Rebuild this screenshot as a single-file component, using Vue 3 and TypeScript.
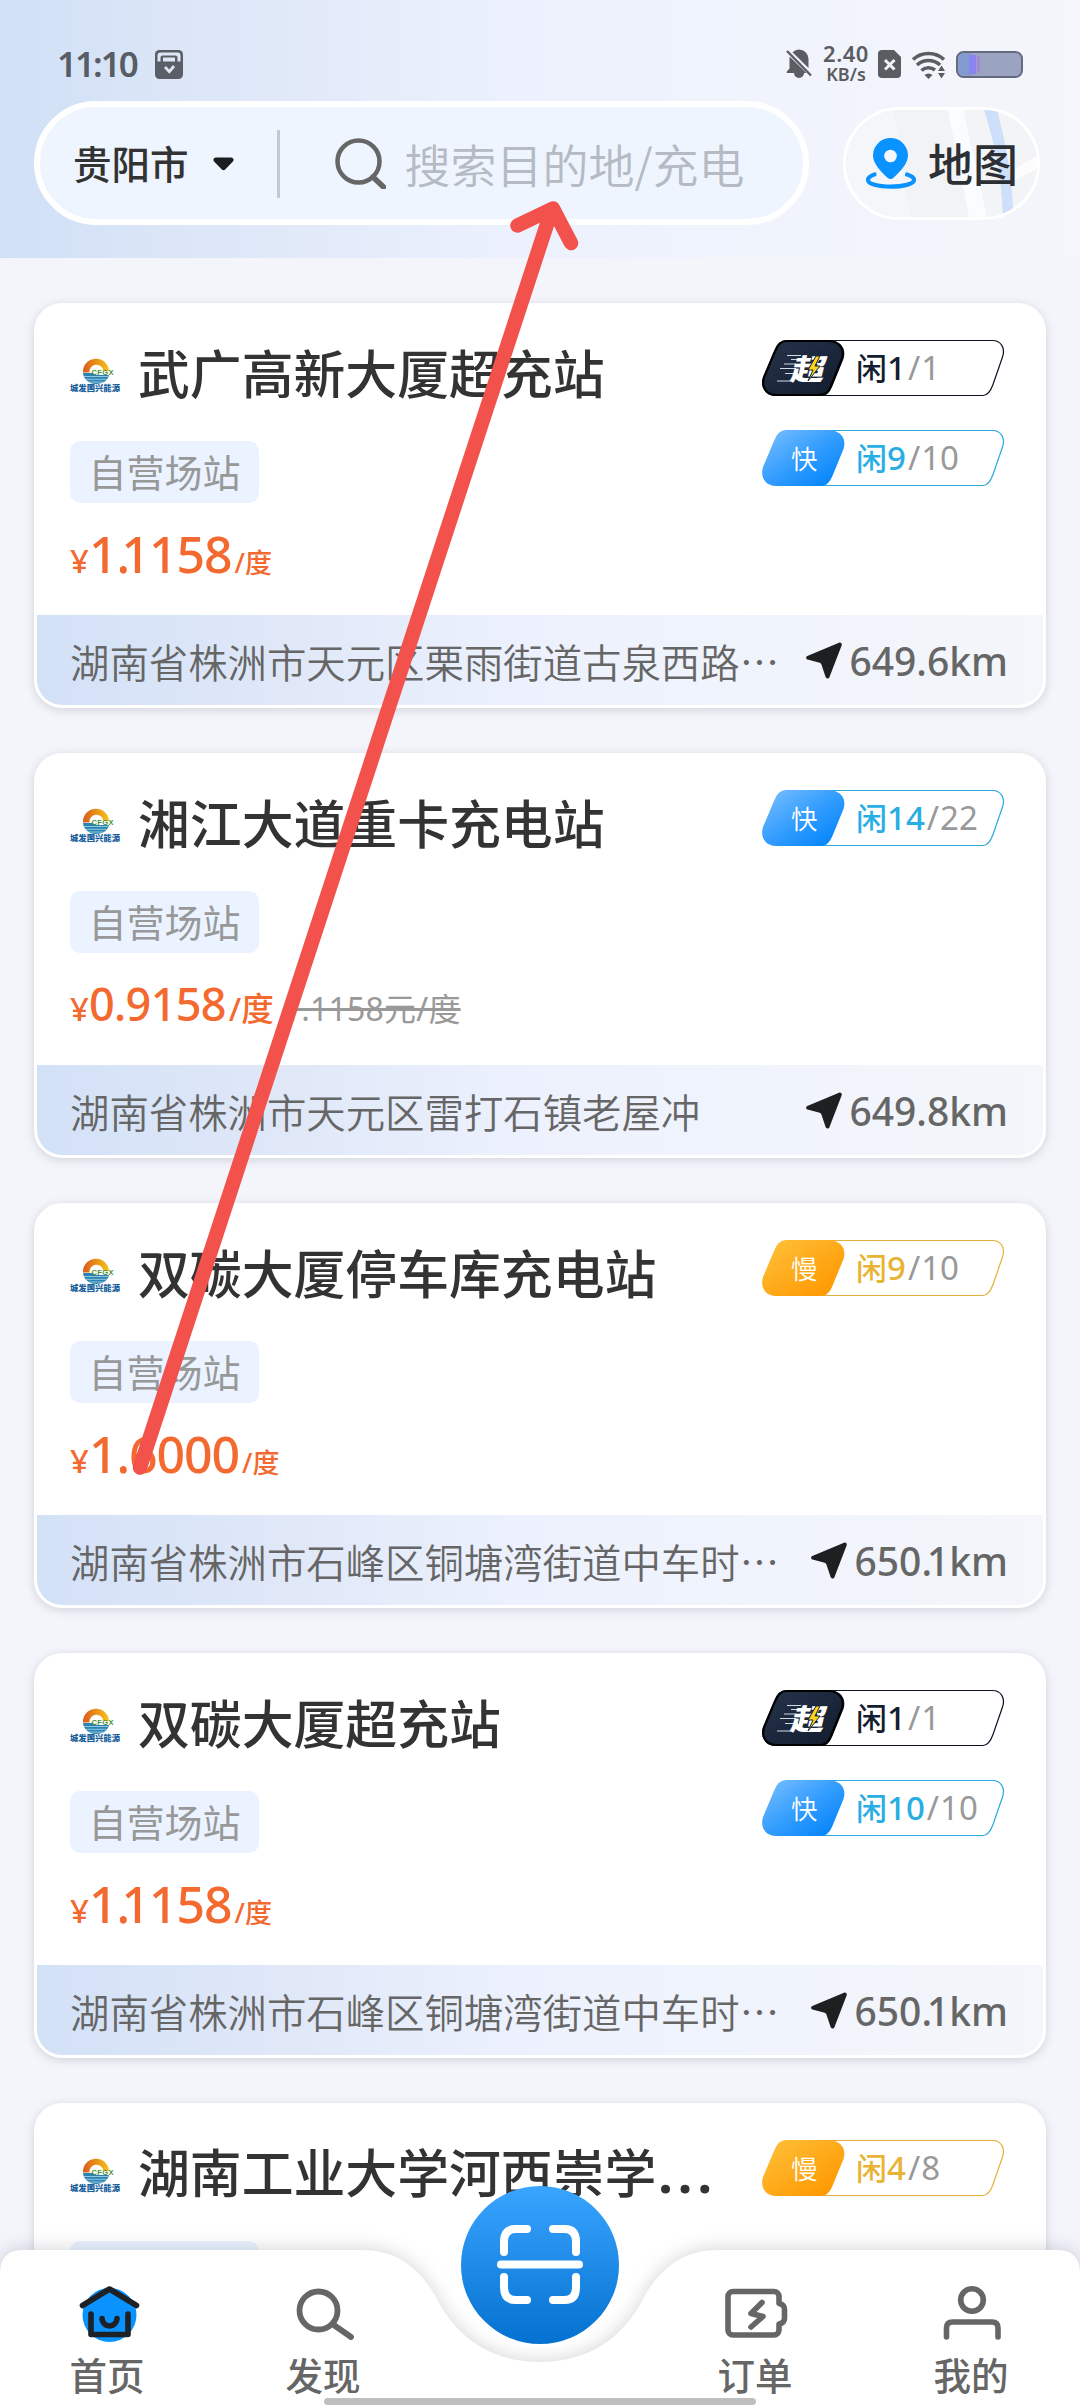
<script setup lang="ts">
type ChipKind = 'super' | 'fast' | 'slow'

interface Chip {
  kind: ChipKind
  free: number
  total: number
}

interface Station {
  name: string
  cut?: boolean
  price?: string
  discounted?: boolean
  original?: string
  address?: string
  distance?: string
  chips: Chip[]
}

const stations: Station[] = [
  {
    name: '武广高新大厦超充站',
    price: '1.1158',
    address: '湖南省株洲市天元区栗雨街道古泉西路…',
    distance: '649.6km',
    chips: [
      { kind: 'super', free: 1, total: 1 },
      { kind: 'fast', free: 9, total: 10 },
    ],
  },
  {
    name: '湘江大道重卡充电站',
    price: '0.9158',
    discounted: true,
    original: '1.1158元/度',
    address: '湖南省株洲市天元区雷打石镇老屋冲',
    distance: '649.8km',
    chips: [{ kind: 'fast', free: 14, total: 22 }],
  },
  {
    name: '双碳大厦停车库充电站',
    price: '1.6000',
    address: '湖南省株洲市石峰区铜塘湾街道中车时…',
    distance: '650.1km',
    chips: [{ kind: 'slow', free: 9, total: 10 }],
  },
  {
    name: '双碳大厦超充站',
    price: '1.1158',
    address: '湖南省株洲市石峰区铜塘湾街道中车时…',
    distance: '650.1km',
    chips: [
      { kind: 'super', free: 1, total: 1 },
      { kind: 'fast', free: 10, total: 10 },
    ],
  },
  {
    name: '湖南工业大学河西崇学',
    cut: true,
    chips: [{ kind: 'slow', free: 4, total: 8 }],
  },
]

const chipLabel: Record<ChipKind, string> = { super: '超', fast: '快', slow: '慢' }
const chipLine: Record<ChipKind, string> = { super: '#0b1222', fast: '#2aa9dc', slow: '#e3b23c' }

// Splits a number after its decimal point so that a following 1 can be kerned.
function pieces(value: string): { text: string; kern: boolean }[] {
  const at = value.indexOf('.') + 1
  const tail = value.slice(at)
  return [
    { text: value.slice(0, at), kern: false },
    { text: tail, kern: tail.startsWith('1') },
  ]
}
</script>

<template>
  <div class="app">
    <svg class="defs" width="0" height="0" aria-hidden="true">
      <defs>
        <linearGradient id="g-super" x1="0" y1="0" x2="1" y2="1">
          <stop offset="0" stop-color="#26344b" />
          <stop offset="1" stop-color="#111b2d" />
        </linearGradient>
        <linearGradient id="g-fast" x1="0" y1="0" x2="1" y2="1">
          <stop offset="0" stop-color="#7cc0ff" />
          <stop offset="0.5" stop-color="#339dfe" />
          <stop offset="0.9" stop-color="#0585fb" />
        </linearGradient>
        <linearGradient id="g-slow" x1="0" y1="0" x2="1" y2="1">
          <stop offset="0" stop-color="#ffc23c" />
          <stop offset="0.9" stop-color="#fe9800" />
        </linearGradient>
        <linearGradient id="g-sun" x1="0" y1="0" x2="1" y2="0">
          <stop offset="0" stop-color="#dc5a1c" />
          <stop offset="1" stop-color="#f5c518" />
        </linearGradient>
      </defs>
    </svg>

    <header class="top">
      <div class="status">
        <div class="status-side">
          <span class="clock">11:10</span>
          <svg width="28" height="29" viewBox="0 0 28 29">
            <rect width="28" height="29" rx="4.5" fill="#5a5e67" />
            <path d="M2.5 11.500V5.500a3 3 0 0 1 3-3h17a3 3 0 0 1 3 3v6h-3V7.500a2 2 0 0 0-2-2h-13a2 2 0 0 0-2 2v4z" fill="#dfe6f5" />
            <path d="M8 7.500h12v4H8z" fill="#dfe6f5" />
            <path d="M10 17l4.300 4.600L19 16" fill="none" stroke="#dfe6f5" stroke-width="2.800" />
          </svg>
        </div>
        <div class="status-side right">
          <svg width="26" height="30" viewBox="0 0 26 30">
            <path d="M13 .5a9.500 9.500 0 0 1 9.500 9.500v9L6.500 3.200A9.500 9.500 0 0 1 13 .5z" fill="#5b5d63" />
            <path d="M3.500 7.500L20.500 24H.8v-1.500l2.700-3z" fill="#5b5d63" />
            <path d="M8 24h10a5 5 0 0 1-10 0z" fill="#5b5d63" />
            <path d="M1 2l24 24.500" stroke="#5b5d63" stroke-width="2.400" />
          </svg>
          <div class="speed"><b>2.40</b><i>KB/s</i></div>
          <svg class="sim" width="23" height="28" viewBox="0 0 23 28">
            <path d="M4 0h12l7 7v17a4 4 0 0 1-4 4H4a4 4 0 0 1-4-4V4a4 4 0 0 1 4-4z" fill="#5b5d63" />
            <path d="M7 10l9.500 9.500M16.500 10L7 19.500" stroke="#eff3fb" stroke-width="3" />
          </svg>
          <svg class="wifi" width="36" height="29" viewBox="0 0 36 29">
            <g fill="none" stroke="#5b5d63" stroke-width="3.600">
              <path d="M2 9.500a23 23 0 0 1 31 0" />
              <path d="M6 15a17 17 0 0 1 23 0" />
              <path d="M10.500 20.500a10.500 10.500 0 0 1 13.500-.5" />
            </g>
            <path d="M13.500 25a6 6 0 0 1 8 0l-4 4z" fill="#5b5d63" />
            <path d="M27 21l3.500-5.500L34 21zM27 23h7l-3.500 5.500z" fill="#5b5d63" />
          </svg>
          <svg class="battery" width="67" height="27" viewBox="0 0 67 27">
            <rect x="1" y="1" width="65" height="25" rx="6.500" fill="#9aa3c0" stroke="#646b80" stroke-width="2" />
            <path d="M8 2.500h8v22H8a5.500 5.500 0 0 1-5.500-5.500V8A5.500 5.500 0 0 1 8 2.500z" fill="#809bd0" />
            <rect x="13" y="4" width="7" height="19" fill="#8b83ee" />
            <rect x="21" y="5" width="3" height="17" fill="#a489d8" />
          </svg>
        </div>
      </div>

      <div class="search-row">
        <div class="search">
          <span class="city">贵阳市</span>
          <svg class="caret" width="21" height="14" viewBox="0 0 21 14">
            <path d="M3 .5h15c2.500 0 3.400 2.600 1.700 4.300l-7.300 7.400a2.700 2.700 0 0 1-3.800 0L1.300 4.800C-.4 3.100.5.5 3 .5z" fill="#1b1d20" />
          </svg>
          <span class="split"></span>
          <svg class="glass" width="51" height="51" viewBox="0 0 51 51">
            <circle cx="23.500" cy="23.500" r="21" fill="none" stroke="#666" stroke-width="4.500" />
            <path d="M38 39l10.500 10" stroke="#666" stroke-width="5.500" stroke-linecap="round" />
          </svg>
          <span class="hint">搜索目的地/充电</span>
        </div>
        <div class="map">
          <svg class="map-bg" viewBox="0 0 191 106" preserveAspectRatio="none">
            <rect width="191" height="106" fill="#f4f6fa" />
            <path d="M48 0h54l30 106H64z" fill="#f1f3f7" />
            <path d="M118 0h73v106h-53z" fill="#f3f4f6" />
            <path d="M102 0h15l24 106h-18z" fill="#fafcff" />
            <path d="M166 60l30-18v14l-28 14z" fill="#fdfdfe" />
            <path d="M138 0h13q15 55 16 100l-10 6q-2-55-19-106z" fill="#cddffb" />
          </svg>
          <svg class="pin" width="52" height="52" viewBox="0 0 52 52">
            <path d="M25.500 1A17.500 17.500 0 0 1 43 18.500c0 9-9 17-14.500 22.300a4.200 4.200 0 0 1-6 0C17 35.500 8 27.500 8 18.500A17.500 17.500 0 0 1 25.500 1z" fill="#0a92ff" />
            <circle cx="25.500" cy="19" r="6.300" fill="#f4f8fd" />
            <path d="M9.500 37.500C5 39 3 41 3 43c0 4 10 6.700 22.500 6.700S49 47 49 43c0-2-2.500-4.200-7-5.500" fill="none" stroke="#0a92ff" stroke-width="4.200" stroke-linecap="round" />
          </svg>
          <span class="map-text">地图</span>
        </div>
      </div>
    </header>

    <main class="list">
      <article v-for="s in stations" :key="s.name" class="card">
        <div class="body">
          <div class="info">
            <div class="title">
              <svg class="logo" width="52" height="35" viewBox="0 0 52 35">
                <path d="M13 16.500a13 13 0 1 1 26-1.500h-5.500a7 7 0 0 0-14 1.500z" fill="url(#g-sun)" />
                <path d="M13 17h9l4 2h13c-.8 5-6 9-13 9s-12.500-5-13-11z" fill="#2b82b3" />
                <path d="M14 20.500h24M15.500 23.300h21M18.500 26h15" stroke="#a9dcea" stroke-width=".8" />
                <text x="21.500" y="18.500" class="logo-en" textLength="22">CFGX</text>
                <text x="0" y="35" class="logo-cn" textLength="50" lengthAdjust="spacingAndGlyphs">城发国兴能源</text>
              </svg>
              <h2>{{ s.name }}<span v-if="s.cut" class="dots">...</span></h2>
            </div>
            <span class="tag">自营场站</span>
            <div v-if="s.price" class="price" :class="{ sale: s.discounted }">
              <span class="yen">¥</span>
              <span class="num"><span v-for="p in pieces(s.price)" :key="p.text" :class="{ kern: p.kern }">{{ p.text }}</span></span>
              <span class="unit">/度</span>
              <del v-if="s.original">{{ s.original }}</del>
            </div>
          </div>
          <div class="chips">
            <div v-for="c in s.chips" :key="c.kind" class="chip" :class="c.kind">
              <svg class="chip-bg" width="242" height="56" viewBox="0 0 242 56">
                <path d="M24 .5H230.500C239 .5 243.500 8 240.500 17L231 44.500Q227 55.500 221 55.500H14" fill="#fff" :stroke="chipLine[c.kind]" stroke-width="1.200" />
                <path
                  d="M24 0H66C78 0 85 8 81.500 19L70 47Q66 56 59 56H14C3 56-2 47 1 37L12 11Q16 0 24 0z"
                  :fill="`url(#g-${c.kind})`"
                />
                <g v-if="c.kind === 'super'">
                  <path d="M24.500 1H66C76.500 1 83 8 80 18.500L68.800 46.500Q65.500 55 58.500 55H14C4 55-1 46.500 2 37.300L13 11.400Q17 1 24.500 1z" fill="none" stroke="#000" stroke-width="2.200" />
                  <path d="M25 15.500h14M29 19.500h8M22 24h12M18 28.500h16M23 33.500h10M15 41h16" stroke="#d4d9e2" stroke-width="1" />
                  <text class="super-text" transform="translate(27.500 39.500) skewX(-14) scale(1.17 1)">超</text>
                  <path d="M54 16l-8 14h5l-5 11 12-15h-5l5-10z" fill="#ffd21c" stroke="#1a2436" stroke-width="1" />
                </g>
              </svg>
              <span class="mark">{{ c.kind === 'super' ? '' : chipLabel[c.kind] }}</span>
              <span class="count"><b>闲<i>{{ c.free }}</i></b><span class="slash">/</span>{{ c.total }}</span>
            </div>
          </div>
        </div>
        <div v-if="s.address && s.distance" class="foot">
          <span class="addr">{{ s.address }}</span>
          <span class="dist">
            <svg width="36" height="37" viewBox="0 0 36 37">
              <path d="M33 .8c1.700-.7 3.200.6 2.700 2.400L23.500 35c-.7 2-3.300 2-3.900.1L15.500 22.700a3 3 0 0 0-1.800-2L1.500 17.400C-.3 16.800-.4 14.800 1.300 14z" fill="#1d2021" />
            </svg>
            <span><span v-for="p in pieces(s.distance)" :key="p.text" :class="{ kern: p.kern }">{{ p.text }}</span></span>
          </span>
        </div>
      </article>
    </main>

    <nav class="tabbar">
      <svg class="bar-bg" width="1080" height="198" viewBox="0 0 1080 198">
        <path d="M0 64Q0 40 22 40H362C400 40 422 62 436 87C455 126 490 152 540 152S625 126 644 87C658 62 680 40 718 40H1058Q1080 40 1080 64V198H0z" fill="#fff" />
      </svg>
      <div class="tabs">
        <div class="tab">
          <svg width="66" height="62" viewBox="0 0 66 62">
            <circle cx="34.500" cy="34" r="27" fill="#0a92ff" />
            <g fill="none" stroke="#1e2226" stroke-width="5.600" stroke-linecap="round" stroke-linejoin="round">
              <path d="M7.500 24.500L34.500 8l27 16.500" />
              <path d="M16 33v20.500h37V33" />
              <path d="M27 37.500a7.500 7.500 0 0 0 15 0" />
            </g>
          </svg>
          <span>首页</span>
        </div>
        <div class="tab">
          <svg width="66" height="62" viewBox="0 0 66 62">
            <g fill="none" stroke="#666" stroke-width="5.800" stroke-linecap="round">
              <circle cx="27.500" cy="29.500" r="19" />
              <path d="M43.500 44.500L60 56" />
            </g>
          </svg>
          <span>发现</span>
        </div>
        <div class="tab blank"></div>
        <div class="tab">
          <svg width="66" height="62" viewBox="0 0 66 62">
            <g fill="none" stroke="#666" stroke-width="5.600" stroke-linecap="round" stroke-linejoin="round">
              <path d="M10 10.500H51a5 5 0 0 1 5 5V22.500q5.500 1 5.500 6V37q0 5-5.500 6V49a5 5 0 0 1-5 5H10a5 5 0 0 1-5-5V15.500a5 5 0 0 1 5-5z" />
              <path d="M39 21.500L28 32.500l12 3L28 46" />
            </g>
          </svg>
          <span>订单</span>
        </div>
        <div class="tab">
          <svg width="66" height="62" viewBox="0 0 66 62">
            <g fill="none" stroke="#666" stroke-width="5.600" stroke-linecap="round">
              <circle cx="33" cy="19" r="11.300" />
              <path d="M7.500 56V47q0-6 6-6H53q6 0 6 6v9" />
            </g>
          </svg>
          <span>我的</span>
        </div>
      </div>
      <div class="scan">
        <svg width="86" height="80" viewBox="0 0 86 80">
          <g fill="none" stroke="#fff" stroke-width="8" stroke-linecap="round">
            <path d="M7 27V16.500Q7 4 18.500 4H30" />
            <path d="M56 4H67.500Q79 4 79 16.500V27" />
            <path d="M7 52V62.500Q7 75 18.500 75H30" />
            <path d="M56 75H67.500Q79 75 79 62.500V52" />
            <path d="M4 39.500H82" />
          </g>
        </svg>
      </div>
      <div class="home-line"></div>
    </nav>

    <svg class="pointer" width="1080" height="2408" viewBox="0 0 1080 2408">
      <g fill="none" stroke="#f2524b" stroke-linecap="round" stroke-linejoin="round">
        <path d="M140 1467.500L551 212" stroke-width="14.500" />
        <path d="M517.500 225.500L553 208.500L571 243" stroke-width="14.500" />
      </g>
    </svg>
  </div>
</template>

<style>
body {
  background: #f4f5fa;
}
</style>

<style scoped>
.app {
  position: relative;
  width: 1080px;
  height: 2408px;
  overflow: hidden;
  background: #f4f5fb;
  font-family: 'Noto Sans CJK SC', 'Noto Sans', sans-serif;
  color: #333;
}

.defs {
  display: block;
}

svg {
  flex: none;
}

h2,
b,
i {
  margin: 0;
  font-weight: inherit;
  font-style: normal;
}

.kern {
  margin-left: -0.13em;
}

.top {
  height: 258px;
  box-sizing: border-box;
  padding-top: 43px;
  background: linear-gradient(90deg, #d0e0f7 0%, #dce6f7 17%, #ecf1fd 48%, #eff3fd 63%, #f4f6fa 100%);
}

.status {
  display: flex;
  justify-content: space-between;
  height: 58px;
  padding: 0 57px 0 57px;
}

.status-side {
  display: flex;
  align-items: center;
  height: 42px;
}

.clock {
  width: 98px;
  margin-top: -2px;
  font: 600 35px/41px 'Noto Sans', sans-serif;
  letter-spacing: -2px;
  color: #585c65;
}

.speed {
  width: 46px;
  margin: -2px 9px 0 11px;
  display: flex;
  flex-direction: column;
  align-items: center;
  font-family: 'Noto Sans', sans-serif;
  font-weight: 600;
  color: #5b5d63;
}

.speed b {
  font-size: 22px;
  line-height: 22px;
  letter-spacing: 0.5px;
}

.speed i {
  font-size: 18px;
  line-height: 20px;
}

.wifi {
  margin-left: 10px;
}

.battery {
  margin-left: 9px;
}

.search-row {
  display: flex;
  align-items: center;
  gap: 34px;
  padding-left: 34px;
}

.search {
  box-sizing: border-box;
  width: 775px;
  height: 124px;
  border: 6px solid #fff;
  border-radius: 62px;
  background: #eef5ff;
  display: flex;
  align-items: center;
  padding-left: 33px;
}

.city {
  margin-top: -2px;
  font-size: 38.5px;
  line-height: 60px;
  font-weight: 500;
}

.caret {
  margin: 2px 0 0 24px;
}

.split {
  width: 3px;
  height: 68px;
  margin-left: 43px;
  margin-top: 1px;
  background: #c3c8d2;
}

.glass {
  margin-left: 55px;
}

.hint {
  margin-left: 19px;
  font-size: 46px;
  line-height: 60px;
  font-weight: 350;
  color: #b5bac3;
  white-space: nowrap;
}

.map {
  position: relative;
  box-sizing: border-box;
  width: 197px;
  height: 113px;
  border: 3px solid #fff;
  border-radius: 57px;
  overflow: hidden;
  display: flex;
  align-items: center;
  padding-left: 19px;
}

.map-bg {
  position: absolute;
  inset: 0;
  width: 100%;
  height: 100%;
}

.pin {
  position: relative;
}

.map-text {
  position: relative;
  margin-left: 11px;
  font-size: 45px;
  line-height: 60px;
  font-weight: 500;
  color: #2c2f33;
}

.list {
  display: flex;
  flex-direction: column;
  gap: 45px;
  padding: 45px 34px 0;
}

.card {
  box-sizing: border-box;
  flex: none;
  height: 405px;
  border: 3px solid #fff;
  border-radius: 28px;
  background: #fff;
  box-shadow: 0 2px 10px rgba(70, 75, 90, 0.2);
}

.body {
  display: flex;
  justify-content: space-between;
  height: 309px;
  padding: 0 39px 0 33px;
}

.title {
  display: flex;
  align-items: center;
  height: 60px;
  margin-top: 37px;
}

.logo {
  overflow: visible;
}

.logo-en {
  font: 700 7.500px 'Liberation Sans', sans-serif;
  fill: #4c8f3a;
}

.logo-cn {
  font-size: 8.500px;
  font-weight: 900;
  fill: #17609b;
}

.title h2 {
  margin: -2px 0 0 16px;
  font-size: 51.84px;
  line-height: 60px;
  font-weight: 500;
  white-space: nowrap;
}

.dots {
  font-family: 'Noto Sans', sans-serif;
  font-weight: 700;
  letter-spacing: 5px;
  margin-left: 2px;
}

.tag {
  display: block;
  width: 189px;
  height: 62px;
  margin-top: 38px;
  border-radius: 10px;
  background: #eaf3ff;
  text-align: center;
  font-size: 38px;
  line-height: 59px;
  color: #989898;
}

.price {
  display: flex;
  align-items: baseline;
  height: 70px;
  margin-top: 16px;
  font-family: 'Noto Sans', 'Noto Sans CJK SC', sans-serif;
  font-weight: 500;
  line-height: 70px;
  color: #f3692f;
  white-space: nowrap;
}

.yen {
  width: 19px;
  font-size: 33px;
}

.num {
  font-size: 50px;
  letter-spacing: -1.1px;
}

.unit {
  font-size: 27px;
  margin-left: 3px;
}

.num .kern {
  margin-left: -0.15em;
}

.sale .num {
  font-size: 45px;
  letter-spacing: -0.7px;
}

.sale .unit {
  font-size: 32.5px;
}

.price del {
  margin-left: 9px;
  font-size: 32px;
  letter-spacing: 0.2px;
  font-weight: 400;
  color: #999;
}

.chips {
  display: flex;
  flex-direction: column;
  gap: 34px;
  padding-top: 34px;
}

.chip {
  position: relative;
  display: flex;
  align-items: center;
  width: 242px;
  height: 56px;
}

.chip-bg {
  position: absolute;
  inset: 0;
  overflow: visible;
}

.super-text {
  font-size: 29px;
  font-weight: 900;
  fill: #fff;
}

.mark {
  position: relative;
  width: 65px;
  padding-left: 29px;
  font-size: 26.5px;
  line-height: 56px;
  font-weight: 350;
  color: #fff;
}

.count {
  position: relative;
  display: block;
  font-family: 'Noto Sans', 'Noto Sans CJK SC', sans-serif;
  font-size: 33px;
  line-height: 56px;
  color: #999;
  white-space: nowrap;
}

.count b {
  font-weight: 500;
  font-size: 31px;
}

.count i {
  font-size: 33px;
}

.slash {
  margin: 0 1px 0 2px;
}

.super b {
  color: #141e33;
}

.fast b {
  color: #29aee3;
}

.slow b {
  color: #e8b435;
}

.foot {
  box-sizing: border-box;
  display: flex;
  justify-content: space-between;
  align-items: center;
  height: 90px;
  padding: 2px 35px 0 33px;
  border-radius: 0 0 25px 25px;
  background: linear-gradient(90deg, #d3e1f7 0%, #e0e8f8 25%, #ecf1fd 48%, #eff3fd 63%, #f4f6fa 100%);
}

.addr {
  font-size: 39.4px;
  line-height: 60px;
  font-weight: 350;
  color: #666;
  white-space: nowrap;
}

.dist {
  display: flex;
  align-items: center;
  gap: 7px;
  font: 500 39px/60px 'Noto Sans', sans-serif;
  color: #666;
}

.dist svg {
  margin-top: -2px;
}

.tabbar {
  position: absolute;
  left: 0;
  bottom: 0;
  width: 1080px;
  height: 198px;
}

.bar-bg {
  position: absolute;
  inset: 0;
  overflow: visible;
  filter: drop-shadow(0 -2px 9px rgba(60, 65, 80, 0.2));
}

.tabs {
  position: relative;
  display: flex;
  padding-top: 71px;
}

.tab {
  width: 216px;
  display: flex;
  flex-direction: column;
  align-items: center;
}

.tab span {
  margin: 6px 2px 0 0;
  font-size: 37.5px;
  line-height: 50px;
  font-weight: 500;
  color: #666;
}

.scan {
  position: absolute;
  left: 461px;
  top: -24px;
  width: 158px;
  height: 158px;
  border-radius: 50%;
  background: linear-gradient(180deg, #3aa5ff 0%, #0571d0 100%);
  display: flex;
  align-items: center;
  justify-content: center;
}

.home-line {
  position: absolute;
  left: 324px;
  bottom: 3px;
  width: 432px;
  height: 7px;
  border-radius: 4px;
  background: #bfbfbf;
}

.pointer {
  position: absolute;
  left: 0;
  top: 0;
}
</style>
